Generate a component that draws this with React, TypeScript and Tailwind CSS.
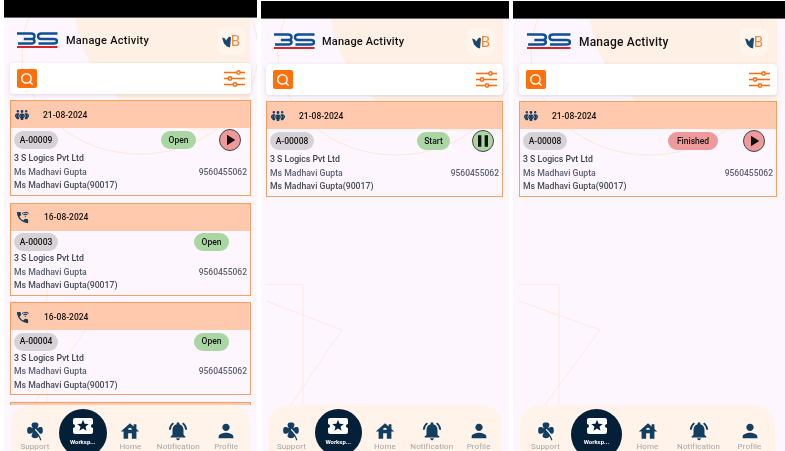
import React from "react";
import { Search } from "lucide-react";
import { MdWifiCalling3, MdPlayArrow, MdPause, MdLocalActivity, MdHouse, MdNotificationsActive, MdPerson } from "react-icons/md";
import { FaPeopleGroup } from "react-icons/fa6";
import { PiCloverFill } from "react-icons/pi";

type CardData = {
  icon: "group" | "phone";
  date: string;
  id: string;
  status: string;
  statusClass: string;
  control?: "play" | "pause";
  controlClass?: string;
};

function Logo({ className }: { className: string }) {
  return (
    <svg viewBox="0 0 42 17" className={className} fill="none" preserveAspectRatio="none">
      <path d="M0 1.500h14.500q3.500 0 3.500 2.700t-3.500 2.800H7M14.500 7q3.500 0 3.500 2.200t-3.500 2.300H1" stroke="#0f4f96" strokeWidth="2.400" />
      <path d="M41.500 1.500H25q-3.500 0-3.500 2.700T25 7h12.500Q41 7 41 9.200t-3.500 2.300H22" stroke="#0f4f96" strokeWidth="2.400" />
      <path d="M0 15h41.500" stroke="#d1262e" strokeWidth="2.200" />
    </svg>
  );
}

function Filter({ className }: { className: string }) {
  return (
    <svg viewBox="0 0 21 17" className={className} fill="none" stroke="#ff6d0a" strokeWidth="1.500">
      <path d="M0 2.500h21M0 8.500h21M0 14.500h21" />
      <circle cx="14.500" cy="2.500" r="1.700" fill="#fff" />
      <circle cx="6" cy="8.500" r="1.700" fill="#fff" />
      <circle cx="11" cy="14.500" r="1.700" fill="#fff" />
    </svg>
  );
}

function Decor({ edge, right, discX, lineX, tipX, footX }: { edge: number; right: number; discX: number; lineX: number; tipX: number; footX: number }) {
  const cx = discX + 129;
  const yr = Math.sqrt(130 * 130 - (right - cx) * (right - cx));
  return (
    <svg className="absolute inset-0 h-full w-full" fill="none" strokeWidth="1">
      <path d={`M${discX} 18A130 130 0 0 0 ${right} ${yr}V18Z`} fill="#fff0e6" />
      <ellipse cx={edge + 130} cy="52" rx="118" ry="102" stroke="#ffe8d8" />
      <path d={`M${edge} 283.500H${lineX}V405M${edge} 300L${tipX} 329L${footX} 405`} stroke="#ffeadd" />
    </svg>
  );
}

function Card({ c, gapClass, ctlClass }: { c: CardData; gapClass: string; ctlClass: string }) {
  return (
    <div className="border border-[#f3a063] shrink-0">
      <div className="flex h-[27px] items-center bg-[#ffc9ae] pl-[4px] pt-[1px]">
        {c.icon === "group" ? <FaPeopleGroup className="w-[14px] h-[14px] text-[#123f61]" /> : <MdWifiCalling3 className="w-[15px] h-[15px] text-[#123f61]" />}
        <span className="ml-[14px] text-[8.5px] font-medium text-[#111]">{c.date}</span>
      </div>
      <div className={`flex items-center pl-[3px] ${c.control ? "h-[23px] pt-[1px] " + ctlClass : "h-[21px] pt-[2px] pr-[21px]"}`}>
        <span className="flex h-[18px] w-[44px] items-center justify-center rounded-full bg-[#d5d1d4] text-[8.5px] font-medium text-[#111]">{c.id}</span>
        <span className="flex-1" />
        <span className={`flex h-[18px] items-center justify-center rounded-full text-[8.5px] font-medium text-[#111] ${c.statusClass}`}>{c.status}</span>
        {c.control && (
          <span className={`flex h-[22px] w-[22px] items-center justify-center rounded-full border border-[#444] ${gapClass} ${c.controlClass}`}>
            {c.control === "play" ? <MdPlayArrow className="h-[18px] w-[18px] text-[#111]" /> : <MdPause className="h-[20px] w-[20px] text-[#111]" />}
          </span>
        )}
      </div>
      <div className={`px-[3px] text-[8.7px] leading-[13.5px] ${c.control ? "pt-[1px] pb-[2.5px]" : "pt-[0.5px] pb-[2px]"}`}>
        <div className="font-medium text-[#3b4350]">3 S Logics Pvt Ltd</div>
        <div className="flex justify-between font-medium text-[#5a6272]">
          <span>Ms Madhavi Gupta</span>
          <span className="text-[8.5px]">9560455062</span>
        </div>
        <div className="font-medium text-[#464c58]">Ms Madhavi Gupta(90017)</div>
      </div>
    </div>
  );
}

function NavItem({ icon, label }: { icon: React.ReactNode; label: string }) {
  return (
    <div className="flex flex-col items-center pt-[15px]">
      <span className="flex h-[22px] w-[22px] items-center justify-center">{icon}</span>
      <span className="whitespace-nowrap text-[8px] leading-[9px] tracking-[0.1px] text-[#a8a5a5]">{label}</span>
    </div>
  );
}

function Nav({ className }: { className: string }) {
  return (
    <div className={`relative grid h-[46px] shrink-0 grid-cols-5 rounded-t-[20px] bg-[#fff3ea] ${className}`}>
      <NavItem icon={<PiCloverFill className="h-[20px] w-[20px] text-[#123f61]" />} label="Support" />
      <div className="mt-[4px] flex aspect-square w-full flex-col items-center rounded-full bg-[#041f38] pt-[5px]">
        <MdLocalActivity className="h-[24px] w-[24px] text-white" />
        <span className="text-[6px] font-bold leading-[8px] text-white">Worksp...</span>
      </div>
      <NavItem icon={<MdHouse className="h-[23px] w-[23px] text-[#123f61]" />} label="Home" />
      <NavItem icon={<MdNotificationsActive className="h-[22px] w-[22px] text-[#123f61]" />} label="Notification" />
      <NavItem icon={<MdPerson className="h-[24px] w-[24px] text-[#123f61]" />} label="Profile" />
    </div>
  );
}

function Screen(p: {
  className: string;
  headClass: string;
  logoClass: string;
  titleClass: string;
  contentClass: string;
  filterClass: string;
  navClass: string;
  gapClass: string;
  ctlClass: string;
  decor: React.ReactNode;
  cards: CardData[];
  peek?: boolean;
}) {
  return (
    <div className={`relative flex shrink-0 flex-col overflow-hidden bg-[#fdf6ff] ${p.className}`}>
      {p.decor}
      <div className="relative h-[18px] shrink-0 border-b border-[#666] bg-black" />
      <div className={`relative flex h-[45px] shrink-0 items-center pt-[1px] ${p.headClass}`}>
        <Logo className={p.logoClass} />
        <span className={`font-medium text-[#111] ${p.titleClass}`}>Manage Activity</span>
        <span className="flex-1" />
        <span className="flex h-[28px] w-[28px] items-center justify-center rounded-[8px] bg-[#fff5ec]">
          <svg viewBox="0 0 9 12" className="h-[13px] w-[9px]">
            <path d="M0 2l3 1 1 2 3-4 2 1-1 10-3-1-3-3z" fill="#17476b" />
          </svg>
          <span className="text-[15px] leading-none font-normal text-[#f08a3c]">B</span>
        </span>
      </div>
      <div className={`relative flex min-h-0 flex-1 flex-col ${p.contentClass}`}>
        <div className="flex h-[31px] shrink-0 items-center justify-between rounded-[4px] bg-white pl-[7px] pr-[6px] shadow-[0_1px_4px_rgba(0,0,0,0.12)]">
          <span className="flex h-[19px] w-[20px] items-center justify-center rounded-[2px] bg-[#ff6f0a]">
            <Search className="h-[14px] w-[14px] text-white" strokeWidth={2.5} />
          </span>
          <Filter className={p.filterClass} />
        </div>
        <div className="mt-[6px] flex min-h-0 flex-1 flex-col gap-[6.500px] overflow-hidden">
          {p.cards.map((c, i) => (
            <Card key={i} c={c} gapClass={p.gapClass} ctlClass={p.ctlClass} />
          ))}
          {p.peek && <div className="h-[20px] shrink-0 border border-[#f3a063] bg-[#ffc9ae]" />}
        </div>
      </div>
      <Nav className={p.navClass} />
    </div>
  );
}

export default function App() {
  const open = "w-[35px] bg-[#a9d6a3]";
  return (
    <div className="flex h-[451px] w-[785px] overflow-hidden bg-white font-['Roboto',sans-serif] blur-[0.35px]">
      <Screen
        className="ml-[4px] h-[451px] w-[253px]"
        headClass="pl-[13px] pr-[12px]"
        logoClass="h-[17px] w-[41px] -mt-[2px]"
        titleClass="ml-[8px] text-[11px] tracking-[0.25px]"
        contentClass="px-[6px]"
        filterClass="h-[17px] w-[21px]"
        navClass="mx-[7px]"
        gapClass="ml-[23px]"
        ctlClass="pr-[9px]"
        peek
        decor={<Decor edge={6} right={246} discX={71} lineX={43} tipX={82} footX={29} />}
        cards={[
          { icon: "group", date: "21-08-2024", id: "A-00009", status: "Open", statusClass: open, control: "play", controlClass: "bg-[#ee9a9a]" },
          { icon: "phone", date: "16-08-2024", id: "A-00003", status: "Open", statusClass: open },
          { icon: "phone", date: "16-08-2024", id: "A-00004", status: "Open", statusClass: open },
        ]}
      />
      <Screen
        className="ml-[4px] mt-[1px] h-[450px] w-[248px]"
        headClass="pl-[13px] pr-[14px]"
        logoClass="h-[17px] w-[41px] -mt-[2px]"
        titleClass="ml-[7px] text-[11px] tracking-[0.2px]"
        contentClass="pl-[5px] pr-[6px]"
        filterClass="h-[17px] w-[21px]"
        navClass="ml-[7px] mr-[7px]"
        gapClass="ml-[22px]"
        ctlClass="pr-[8px]"
        decor={<Decor edge={5} right={242} discX={70} lineX={42} tipX={81} footX={29} />}
        cards={[{ icon: "group", date: "21-08-2024", id: "A-00008", status: "Start", statusClass: "w-[33px] bg-[#a9d6a3]", control: "pause", controlClass: "bg-[#a9d6a3]" }]}
      />
      <Screen
        className="ml-[4px] mt-[1px] h-[450px] w-[272px]"
        headClass="pl-[14px] pr-[17px]"
        logoClass="h-[17px] w-[44px] -mt-[2px]"
        titleClass="ml-[8px] text-[12px] tracking-[0.2px]"
        contentClass="pl-[6px] pr-[8px]"
        filterClass="h-[17px] w-[23px]"
        navClass="ml-[7px] mr-[10px]"
        gapClass="ml-[25px]"
        ctlClass="pr-[11px]"
        decor={<Decor edge={6} right={264} discX={77} lineX={46} tipX={87} footX={31} />}
        cards={[{ icon: "group", date: "21-08-2024", id: "A-00008", status: "Finished", statusClass: "w-[50px] bg-[#ee9a9a]", control: "play", controlClass: "bg-[#ee9a9a]" }]}
      />
    </div>
  );
}
